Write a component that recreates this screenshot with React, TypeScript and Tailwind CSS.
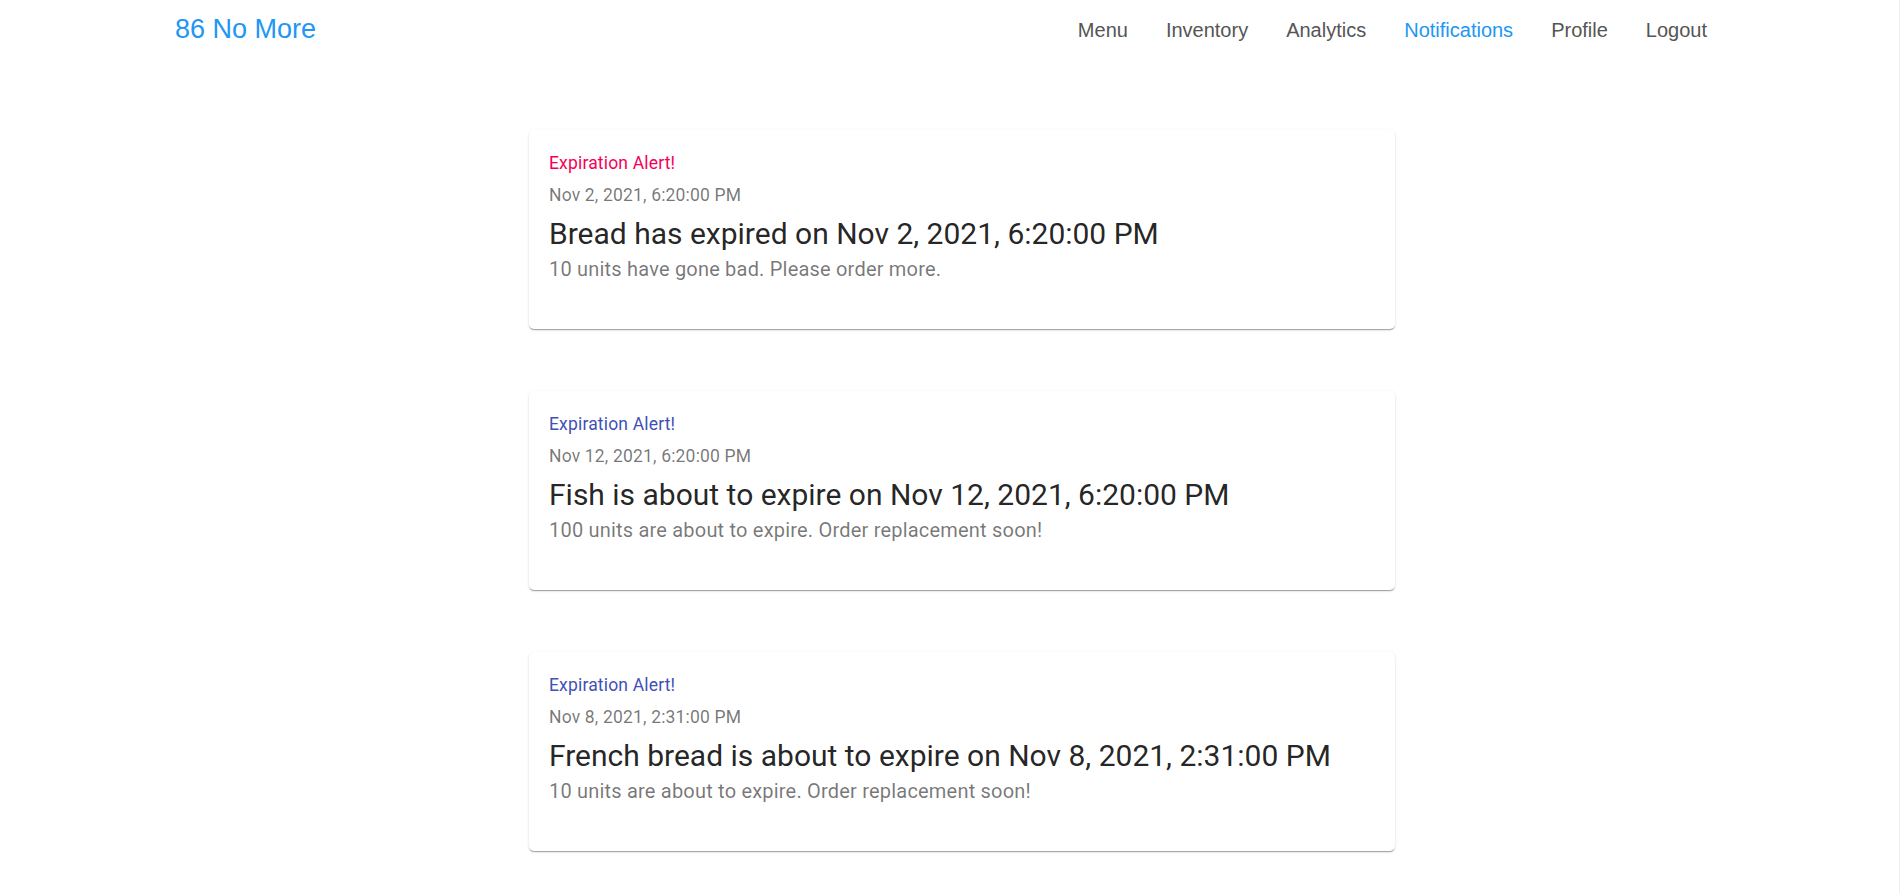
import React from 'react'

interface Alert {
  id: number
  color: string
  date: string
  title: string
  body: string
}

const alerts: Alert[] = [
  {
    id: 1,
    color: 'text-[#f50057]',
    date: 'Nov 2, 2021, 6:20:00 PM',
    title: 'Bread has expired on Nov 2, 2021, 6:20:00 PM',
    body: '10 units have gone bad. Please order more.',
  },
  {
    id: 2,
    color: 'text-[#3f51b5]',
    date: 'Nov 12, 2021, 6:20:00 PM',
    title: 'Fish is about to expire on Nov 12, 2021, 6:20:00 PM',
    body: '100 units are about to expire. Order replacement soon!',
  },
  {
    id: 3,
    color: 'text-[#3f51b5]',
    date: 'Nov 8, 2021, 2:31:00 PM',
    title: 'French bread is about to expire on Nov 8, 2021, 2:31:00 PM',
    body: '10 units are about to expire. Order replacement soon!',
  },
]

const navLinks = ['Menu', 'Inventory', 'Analytics', 'Notifications', 'Profile', 'Logout']

export default function App() {
  return (
    <div className="w-[1900px] min-h-[893px] bg-white border-r border-[#eeeeee]">
      {/* Header */}
      <header className="h-[58px] flex justify-between pl-[175px] pr-[192px] font-['Liberation_Sans',Arial,sans-serif]">
        <div className="pt-[16px] text-[27px] leading-none text-[#2196f3]">86 No More</div>
        <nav className="flex gap-[38px] pt-[20px] text-[20px] leading-none">
          {navLinks.map((link) => (
            <span
              key={link}
              className={link === 'Notifications' ? 'text-[#2196f3]' : 'text-[#555555]'}
            >
              {link}
            </span>
          ))}
        </nav>
      </header>

      {/* Notifications */}
      <main className="pt-[72px] pb-[41px] pl-[529px] flex flex-col gap-[62px] font-['Roboto',sans-serif]">
        {alerts.map((alert) => (
          <div
            key={alert.id}
            className="w-[866px] bg-white rounded-[5px] px-[20px] pt-[21px] pb-[45px] shadow-[0_2px_1px_-1px_rgba(0,0,0,0.2),0_1px_1px_0_rgba(0,0,0,0.14),0_1px_3px_0_rgba(0,0,0,0.12)]"
          >
            <div className={`text-[17.5px] leading-[25px] mb-[7px] tracking-[0.01em] ${alert.color}`}>
              Expiration Alert!
            </div>
            <div className="text-[17.5px] leading-[25px] mb-[6px] tracking-[0.01em] text-[rgba(0,0,0,0.54)]">
              {alert.date}
            </div>
            <div className="text-[30px] leading-[40px] text-[rgba(0,0,0,0.87)]">{alert.title}</div>
            <div className="text-[20px] leading-[30px] tracking-[0.01em] text-[rgba(0,0,0,0.54)]">
              {alert.body}
            </div>
          </div>
        ))}
      </main>
    </div>
  )
}
